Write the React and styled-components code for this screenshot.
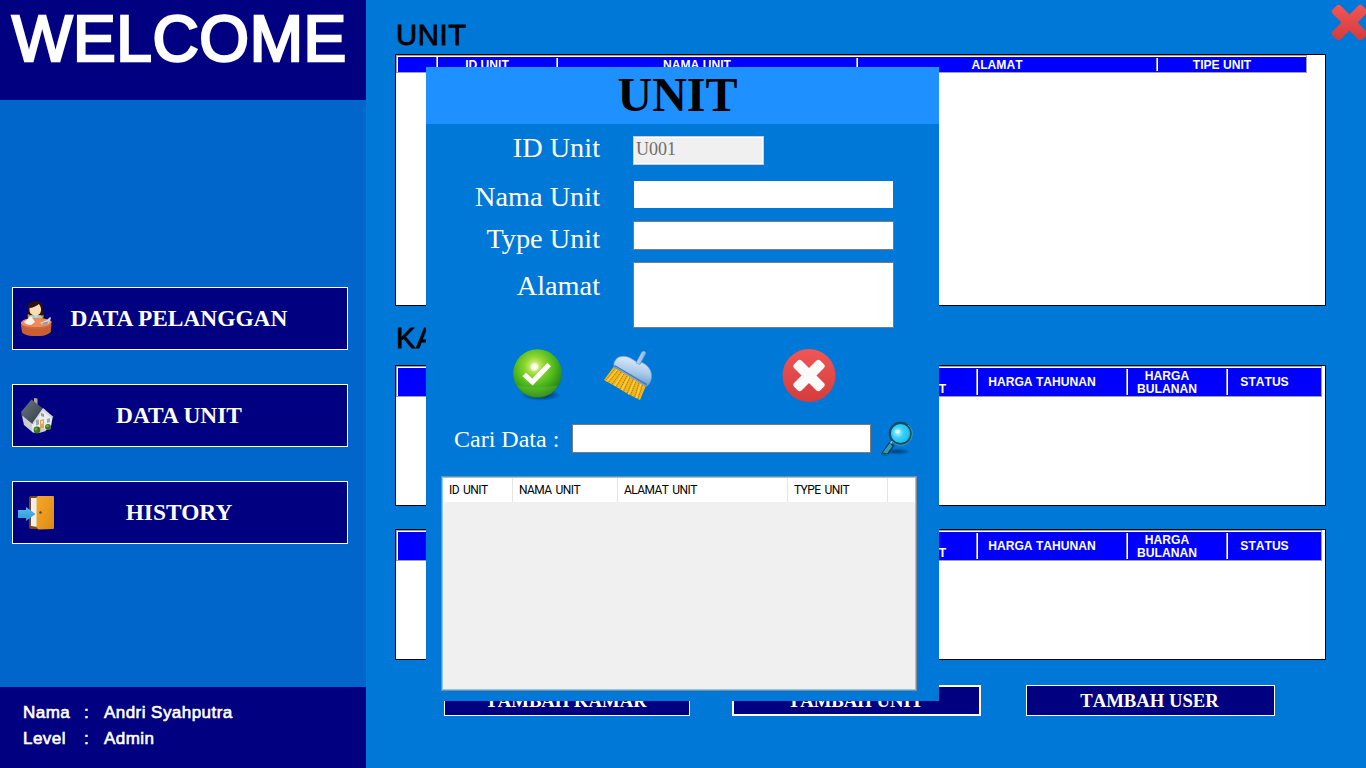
import React from "react";
import styled, { createGlobalStyle, css } from "styled-components";

const GlobalStyle = createGlobalStyle`
  * { box-sizing: border-box; font-kerning: none; }
  body {
    margin: 0;
    overflow: hidden;
    background: #0078d7;
    font-family: "Liberation Sans", Arial, sans-serif;
  }
`;

const serif = css`
  font-family: "Liberation Serif", "Times New Roman", serif;
`;

const Screen = styled.div`
  position: relative;
  display: flex;
  width: 1366px;
  height: 768px;
  overflow: hidden;
  background: #0078d7;
`;

/* ---------- sidebar ---------- */

const Sidebar = styled.aside`
  display: flex;
  flex-direction: column;
  width: 366px;
  background: #0066cc;
`;

const Welcome = styled.h1`
  margin: 0;
  height: 100px;
  padding: 3px 0 0 12px;
  background: #000080;
  color: #fff;
  font-size: 64px;
  line-height: 73px;
  font-weight: normal;
  letter-spacing: 0.6px;
  -webkit-text-stroke: 2.6px #fff;
  white-space: nowrap;
`;

const Menu = styled.nav`
  flex: 1;
  display: flex;
  flex-direction: column;
  gap: 34px;
  padding: 187px 18px 0 12px;
`;

const MenuButton = styled.button`
  ${serif}
  display: grid;
  grid-template-columns: 36px 1fr;
  align-items: center;
  height: 63px;
  padding: 0 41px 0 5px;
  border: 1px solid #fff;
  background: #000080;
  color: #fff;
  font-size: 23.4px;
  font-weight: bold;
  white-space: nowrap;

  svg { display: block; }
  span {
    margin-left: -2px;
    padding-bottom: 1px;
    text-align: center;
    font-kerning: normal;
  }
`;

const Profile = styled.dl`
  display: grid;
  grid-template-columns: 61px 20px 1fr;
  grid-auto-rows: 26px;
  height: 81px;
  margin: 0;
  padding: 13px 0 0 23px;
  background: #000080;
  color: #fff;
  font-size: 17px;
  line-height: 25px;
  -webkit-text-stroke: 0.6px #fff;
  letter-spacing: 0.45px;

  dt, dd { margin: 0; }
`;

/* ---------- main area ---------- */

const Main = styled.main`
  flex: 1;
  padding: 18px 40px 0 29px;
`;

const Heading = styled.h2`
  height: ${(p) => p.$height}px;
  margin: 0;
  padding-left: 1px;
  color: #000;
  font-size: 29.3px;
  line-height: 34px;
  font-weight: normal;
  letter-spacing: 0.6px;
  -webkit-text-stroke: 0.8px #000;
`;

const Table = styled.section`
  width: 931px;
  height: ${(p) => p.$height}px;
  margin-bottom: ${(p) => p.$gap}px;
  border: 1px solid #000;
  background: #fff;
`;

const HeaderRow = styled.div`
  display: flex;
  width: fit-content;
  height: ${(p) => p.$height}px;
  border: 1px solid #a0a0a0;
  padding: 1px 0 0 1px;
  background: linear-gradient(#0000ff, #0000ff) content-box, #fff;
`;

const HeaderCell = styled.div`
  display: flex;
  align-items: center;
  justify-content: center;
  width: ${(p) => p.$width}px;
  padding: 1px ${(p) => (p.$last ? 20 : 22)}px 0 0;
  background: ${(p) =>
    p.$last
      ? "none"
      : `linear-gradient(90deg, #a0a0a0 50%, #fff 50%) right center / 2px ${
          p.$full ? "100%" : "calc(100% - 2px)"
        } no-repeat`};
  color: #fff;
  font-size: 12.1px;
  line-height: 13px;
  font-weight: bold;
  text-align: center;
  white-space: pre;
`;

const Actions = styled.div`
  display: flex;
  padding-left: 49px;
`;

const ActionButton = styled.button`
  ${serif}
  width: ${(p) => p.$width}px;
  height: 31px;
  margin-right: ${(p) => p.$gap || 0}px;
  padding: 0 2px 0 0;
  border: ${(p) => (p.$active ? 2 : 1)}px solid #fff;
  background: #000080;
  color: #fff;
  font-size: 18.7px;
  line-height: 22px;
  font-weight: bold;
  white-space: nowrap;
`;

const CloseButton = styled.div`
  position: absolute;
  top: 4px;
  right: -2px;
  width: 37px;
  height: 37px;
  svg { display: block; }
`;

/* ---------- dialog ---------- */

const Dialog = styled.div`
  ${serif}
  position: absolute;
  left: 426px;
  top: 67px;
  width: 513px;
  height: 634px;
  background: #0078d7;
  color: #fff;
`;

const DialogTitle = styled.h2`
  margin: 0;
  height: 57px;
  padding-right: 10px;
  background: #1e90ff;
  color: #000;
  font-size: 48px;
  line-height: 56px;
  font-weight: bold;
  text-align: center;
`;

const Form = styled.div`
  display: flex;
  flex-direction: column;
  padding: 12px 45px 0 0;
`;

const Field = styled.label`
  display: grid;
  grid-template-columns: 174px 261px;
  column-gap: 33px;
  height: ${(p) => p.$height}px;
  font-size: 28.3px;
  line-height: 30px;
  text-align: right;

  span {
    height: 30px;
    padding-top: ${(p) => p.$drop || 0}px;
    margin-top: ${(p) => p.$lift || 0}px;
    font-kerning: normal;
  }
`;

const TextBox = styled.input`
  ${serif}
  display: block;
  width: ${(p) => p.$width || 261}px;
  height: ${(p) => p.$height || 29}px;
  padding: 0 2px;
  border: 1px solid ${(p) => (p.$focused ? "#0078d7" : "#7a7a7a")};
  border-radius: 0;
  outline: none;
  background: #fff;
  font-size: 18px;
  resize: none;

  &:disabled {
    padding: 0 2px 2px;
    border-color: #cccccc;
    background: #f0f0f0;
    box-shadow: inset 0 0 0 1px #fff;
    color: #6d6d6d;
    -webkit-text-fill-color: #6d6d6d;
    opacity: 1;
  }
`;

const IconBar = styled.div`
  display: flex;
  height: 56px;
  margin-top: 21px;
  padding-left: 86px;
  svg { display: block; }
  svg:nth-child(2) { margin-left: 39px; }
  svg:nth-child(3) { margin-left: 128px; }
`;

const SearchRow = styled.div`
  display: flex;
  height: 36px;
  margin: 16px 0 0 28px;
  font-size: 24px;
  line-height: 36px;

  span { width: 118px; white-space: nowrap; }
  input { margin-top: 3px; }
  svg { display: block; margin-left: 8px; }
`;

const List = styled.div`
  width: 476px;
  height: 215px;
  margin: 19px 0 0 15px;
  border: 1px solid #828790;
  box-shadow: inset 0 0 0 1px #8fcbe6;
  padding: 1px;
  background: #f0f0f0;
`;

const ListHeader = styled.div`
  display: flex;
  height: 24px;
  background: #fff;
  color: #000;
  font-family: Roboto, "Open Sans", sans-serif;
  font-size: 12px;
  line-height: 24px;
  letter-spacing: -0.55px;
  word-spacing: 1.5px;
`;

const ListColumn = styled.div`
  width: ${(p) => p.$width}px;
  padding-left: 6px;
  border-right: 1px solid #e5e5e5;
  white-space: nowrap;
`;

/* ---------- icons ---------- */

const CustomerIcon = () => (
  <svg width="36" height="38" viewBox="0 0 36 38">
    <path d="M10 14c-1 3 0 5 2 5h12c2-1 2-3 1-5z" fill="#b99a2e" />
    <path d="M9.500 8c0-5 4-7 8-7 5 0 7.500 3 7.500 7l1 5c0 2-2 3-3 2H12c-2 0-2.500-3-2.500-7z" fill="#2a1210" />
    <path d="M11.500 8c3 0 7-2 9.500-4 2 3 3 6 1 9.500-2 2.500-7 2.500-9.500 0-1-1.500-1-3-1-5.500z" fill="#fbdcb8" />
    <path d="M11 16l5-1 2 2 3-2 3 2v6H10z" fill="#9dd3d4" />
    <path d="M16 15l2 3 2-3z" fill="#f9d3ac" />
    <path d="M3 23c1-4 8-5 15-5s14 1 15.500 4l-1 10c-3 3-8 4-14 4S6 35 4 32z" fill="#d2673a" />
    <path d="M3 23c0-3 8-5 15-5s15.500 2 15.500 4c0 3-7 5-15 5S3 26 3 23z" fill="#ee8b58" />
    <path d="M3.500 25c4 3 9 4 15 4s11-1 15-4l-1 7c-3 3-8 4-14 4S6 35 4 32z" fill="#c95f35" />
    <path d="M6 22l7-6 4 6-4 3c-3 0-6-1-7-3z" fill="#f6f3ed" />
    <path d="M22 23l7-3 3-3 1 1-2 5-6 2z" fill="#d9dde2" />
    <path d="M24 23l7-2-2 3-4 1z" fill="#8e9bab" />
  </svg>
);

const HouseIcon = () => (
  <svg width="37" height="38" viewBox="0 0 37 38">
    <defs>
      <linearGradient id="roof" x1="0" y1="0" x2="1" y2="1">
        <stop offset="0" stopColor="#6b7680" />
        <stop offset="1" stopColor="#303b46" />
      </linearGradient>
    </defs>
    <path d="M16 1l3.500.5V10l-3.500-3z" fill="#b9a09c" />
    <path d="M3.500 17l12 10v9L6 28z" fill="#c9ced2" />
    <path d="M14 27L24 12l10.500 9-2 11-15 4-3-1z" fill="#eceded" />
    <path d="M3 15L13.500 2.500 25 11.500 14.500 27 4 18.500z" fill="url(#roof)" />
    <path d="M25 11l10.500 9-1.500 1-9.500-7-9 14-1-2z" fill="#d4d8dc" />
    <path d="M23 16l3 1v3l-3-1z" fill="#8e9ba5" />
    <path d="M18 23l3-.5v5l-3 1zM29 22l3-1v4l-3 1z" fill="#99a8b3" />
    <path d="M22 23l4-1v9l-4 1z" fill="#e2a353" />
    <path d="M23 24l2-.5v3l-2 .5z" fill="#fbe0a4" />
    <path d="M21 32l5-1 2 3-7 2z" fill="#d1cfca" />
    <circle cx="19" cy="33" r="3.400" fill="#397329" />
    <circle cx="18" cy="32" r="1.500" fill="#66a64a" />
    <circle cx="30" cy="30" r="2.900" fill="#397329" />
    <circle cx="29.500" cy="29" r="1.300" fill="#70ad51" />
  </svg>
);

const DoorIcon = () => (
  <svg width="37" height="36" viewBox="0 0 37 36">
    <defs>
      <linearGradient id="door" x1="0" y1="0" x2="1" y2="1">
        <stop offset="0" stopColor="#f5a82b" />
        <stop offset="1" stopColor="#dc8b12" />
      </linearGradient>
      <linearGradient id="arrow" x1="0" y1="0" x2="0" y2="1">
        <stop offset="0" stopColor="#55b9eb" />
        <stop offset="1" stopColor="#279ddb" />
      </linearGradient>
    </defs>
    <rect x="11" y="1" width="20" height="33" rx="2" fill="#754817" />
    <path d="M13 3h7v29l-7-1z" fill="#f4f4f2" />
    <path d="M15 3v28M17 3v28" stroke="#dde0e1" strokeWidth="0.600" />
    <path d="M18.500 2.500L20 1h15q1 0 1 1v31q0 1-1 1l-14.500.5-2-2z" fill="url(#door)" />
    <circle cx="22.500" cy="17.500" r="1.200" fill="#5e421c" />
    <path d="M0 15h8v-3l9.500 7L8 26v-3H0z" fill="url(#arrow)" />
  </svg>
);

const CrossShape = ({ length, width }) => (
  <>
    {[45, -45].map((angle) => (
      <rect
        key={angle}
        x={-length / 2}
        y={-width / 2}
        width={length}
        height={width}
        rx="3"
        transform={`rotate(${angle})`}
      />
    ))}
  </>
);

const WindowCloseIcon = () => (
  <svg width="37" height="37" viewBox="0 0 37 37">
    <defs>
      <linearGradient id="redcross" x1="0" y1="0" x2="0" y2="1">
        <stop offset="0" stopColor="#f25757" />
        <stop offset="1" stopColor="#d53a3a" />
      </linearGradient>
      <clipPath id="crossclip">
        <rect x="-21" y="-5.700" width="42" height="11.400" rx="3" transform="translate(18.500 18.500) rotate(45)" />
        <rect x="-21" y="-5.700" width="42" height="11.400" rx="3" transform="translate(18.500 18.500) rotate(-45)" />
      </clipPath>
    </defs>
    <rect width="37" height="37" fill="url(#redcross)" clipPath="url(#crossclip)" />
  </svg>
);

const CheckIcon = () => (
  <svg width="52" height="54" viewBox="0 0 52 54">
    <defs>
      <radialGradient id="ball" cx="0.440" cy="0.350" r="0.650">
        <stop offset="0" stopColor="#f3f7a0" />
        <stop offset="0.300" stopColor="#90d632" />
        <stop offset="0.620" stopColor="#4dba1c" />
        <stop offset="1" stopColor="#247d15" />
      </radialGradient>
      <radialGradient id="glint">
        <stop offset="0" stopColor="#fff" />
        <stop offset="0.450" stopColor="#fff" stopOpacity="0.850" />
        <stop offset="1" stopColor="#fff" stopOpacity="0" />
      </radialGradient>
      <radialGradient id="shade">
        <stop offset="0" stopColor="#001c45" stopOpacity="0.900" />
        <stop offset="1" stopColor="#001c45" stopOpacity="0" />
      </radialGradient>
    </defs>
    <ellipse cx="29" cy="46" rx="20" ry="6" fill="url(#shade)" />
    <circle cx="25.500" cy="24.500" r="24.300" fill="url(#ball)" />
    <path d="M5 36c10 3 32 3 41 0-4 8-11 12-20.500 12S9 43 5 36z" fill="#8fe04b" opacity="0.220" />
    <circle cx="22.500" cy="18" r="5" fill="url(#glint)" />
    <path d="M12.200 25.500l8.300 7.500L37.200 15.500" fill="none" stroke="#fff" strokeWidth="5" strokeLinejoin="miter" />
  </svg>
);

const BroomIcon = () => (
  <svg width="51" height="54" viewBox="0 0 51 54">
    <defs>
      <linearGradient id="cap" x1="0.600" y1="0" x2="0.350" y2="1">
        <stop offset="0" stopColor="#e4eefa" />
        <stop offset="0.500" stopColor="#a9c9e9" />
        <stop offset="1" stopColor="#4d89c4" />
      </linearGradient>
      <linearGradient id="stick" x1="0" y1="0" x2="1" y2="0.500">
        <stop offset="0" stopColor="#f2f8fe" />
        <stop offset="1" stopColor="#6ea5d8" />
      </linearGradient>
    </defs>
    <path d="M10.500 18L43 36.500l-6 14.500-9-4.500-8-4.500-9-5.500L1 31z" fill="#f4b71b" />
    <path
      d="M12 19.500L2.500 31.500M15 21.500L5.500 33.500M18 23L9 35.500M21 25L13 38M24 27L17 40M27 28.500L20.500 42.500M30 30.500L24 44.500M33 32.500L27.500 46.500M36 34L31.500 48.500M39.500 36L35 50"
      stroke="#8e6d18"
      strokeWidth="0.800"
      strokeDasharray="1.500 0.700"
    />
    <path d="M14 20.500L4 32.500M20 24.500l-8.500 12.500M26 27.500l-7.500 13.500M32 31.500l-6.500 14M38 35l-5 14" stroke="#ffdd62" strokeWidth="0.900" />
    <path
      d="M11 17.500c-1-5 3-10 8-10 5-1 9 2 14 5 1 2 4 2 6 1 7 3 10 9 9.500 15-.5 4-2 7-5.500 9z"
      fill="url(#cap)"
      stroke="#6f9fce"
      strokeWidth="0.700"
    />
    <path d="M33 14L38.500 3.500q3-3 4.500.5L37 15.500z" fill="url(#stick)" stroke="#5a8fc3" strokeWidth="0.500" />
    <path d="M11.500 16.500L43.500 35.500" stroke="#3f75ae" strokeWidth="1.400" />
  </svg>
);

const CancelIcon = () => (
  <svg width="54" height="54" viewBox="0 0 54 54">
    <defs>
      <linearGradient id="disc" x1="0" y1="0" x2="0" y2="1">
        <stop offset="0" stopColor="#f05656" />
        <stop offset="1" stopColor="#d43c3d" />
      </linearGradient>
    </defs>
    <circle cx="27" cy="26.500" r="26.500" fill="url(#disc)" />
    <g transform="translate(27 26.500)" fill="#fafafa">
      <CrossShape length={37} width={10.6} />
    </g>
  </svg>
);

const SearchIcon = () => (
  <svg width="36" height="36" viewBox="0 0 36 36">
    <defs>
      <radialGradient id="lens" cx="0.380" cy="0.450" r="0.600">
        <stop offset="0" stopColor="#b8f5ff" />
        <stop offset="0.450" stopColor="#36d0f8" />
        <stop offset="1" stopColor="#12baf0" />
      </radialGradient>
      <radialGradient id="drop">
        <stop offset="0" stopColor="#002b55" stopOpacity="0.800" />
        <stop offset="1" stopColor="#002b55" stopOpacity="0" />
      </radialGradient>
    </defs>
    <ellipse cx="18" cy="30.500" rx="14" ry="3.500" fill="url(#drop)" />
    <path d="M10.500 20.500l5 4-6.500 9.500q-3.500 2-7-1z" fill="#143f50" />
    <path d="M10.500 22.500l3 2.500-5.500 7.500-4-1z" fill="#2f9db9" />
    <path d="M3 32.500q3 2.500 6 1" stroke="#1b6e89" strokeWidth="1.200" fill="none" />
    <path d="M11.500 22.500l3.500-4.500" stroke="#a0c4cc" strokeWidth="1.500" />
    <circle cx="21.500" cy="12.500" r="10.700" fill="url(#lens)" stroke="#17495d" strokeWidth="2.200" />
    <path d="M13 20a11.300 11.300 0 0 0 19.500-3.500A11.300 11.300 0 0 0 29 4" fill="none" stroke="#51a5b7" strokeWidth="0.900" />
    <ellipse cx="18.500" cy="10.500" rx="2.500" ry="2" fill="#fff" opacity="0.600" />
  </svg>
);

/* ---------- data ---------- */

const menu = [
  { label: "DATA PELANGGAN", icon: <CustomerIcon /> },
  { label: "DATA UNIT", icon: <HouseIcon /> },
  { label: "HISTORY", icon: <DoorIcon /> },
];

const unitColumns = [
  { label: "", width: 40, full: true },
  { label: "ID UNIT", width: 120 },
  { label: "NAMA UNIT", width: 300 },
  { label: "ALAMAT", width: 300 },
  { label: "TIPE UNIT", width: 148 },
];

const roomColumns = [
  { label: "", width: 40, full: true },
  { label: "ID KAMAR", width: 120 },
  { label: "NAMA KAMAR", width: 320 },
  { label: "ID\nTIPE UNIT", width: 100 },
  { label: "HARGA TAHUNAN", width: 150 },
  { label: "HARGA\nBULANAN", width: 100 },
  { label: "STATUS", width: 93 },
];

const listColumns = [
  { label: "ID UNIT", width: 70 },
  { label: "NAMA UNIT", width: 105 },
  { label: "ALAMAT UNIT", width: 170 },
  { label: "TYPE UNIT", width: 100 },
];

const DataTable = ({ columns, height, gap, headerHeight }) => (
  <Table $height={height} $gap={gap}>
    <HeaderRow $height={headerHeight}>
      {columns.map((c, i) => (
        <HeaderCell key={i} $width={c.width} $full={c.full} $last={i === columns.length - 1}>
          {c.label}
        </HeaderCell>
      ))}
    </HeaderRow>
  </Table>
);

export default function App() {
  return (
    <>
      <GlobalStyle />
      <Screen>
        <Sidebar>
          <Welcome>WELCOME</Welcome>
          <Menu>
            {menu.map((m) => (
              <MenuButton key={m.label}>
                {m.icon}
                <span>{m.label}</span>
              </MenuButton>
            ))}
          </Menu>
          <Profile>
            <dt>Nama</dt>
            <dd>:</dd>
            <dd>Andri Syahputra</dd>
            <dt>Level</dt>
            <dd>:</dd>
            <dd>Admin</dd>
          </Profile>
        </Sidebar>

        <Main>
          <Heading $height={36}>UNIT</Heading>
          <DataTable columns={unitColumns} height={252} gap={15} headerHeight={18} />
          <Heading $height={44}>KAMAR</Heading>
          <DataTable columns={roomColumns} height={141} gap={23} headerHeight={31} />
          <DataTable columns={roomColumns} height={131} gap={25} headerHeight={31} />
          <Actions>
            <ActionButton $width={246} $gap={42}>TAMBAH KAMAR</ActionButton>
            <ActionButton $width={249} $gap={45} $active>TAMBAH UNIT</ActionButton>
            <ActionButton $width={249}>TAMBAH USER</ActionButton>
          </Actions>
        </Main>

        <CloseButton>
          <WindowCloseIcon />
        </CloseButton>

        <Dialog>
          <DialogTitle>UNIT</DialogTitle>
          <Form>
            <Field $height={44} $lift={-3}>
              <span>ID Unit</span>
              <TextBox $width={131} defaultValue="U001" disabled />
            </Field>
            <Field $height={41} $drop={2}>
              <span>Nama Unit</span>
              <TextBox $focused />
            </Field>
            <Field $height={41} $drop={3}>
              <span>Type Unit</span>
              <TextBox />
            </Field>
            <Field $height={66} $drop={9}>
              <span>Alamat</span>
              <TextBox as="textarea" $height={66} />
            </Field>
          </Form>
          <IconBar>
            <CheckIcon />
            <BroomIcon />
            <CancelIcon />
          </IconBar>
          <SearchRow>
            <span>Cari Data :</span>
            <TextBox $width={299} />
            <SearchIcon />
          </SearchRow>
          <List>
            <ListHeader>
              {listColumns.map((c) => (
                <ListColumn key={c.label} $width={c.width}>{c.label}</ListColumn>
              ))}
            </ListHeader>
          </List>
        </Dialog>
      </Screen>
    </>
  );
}
